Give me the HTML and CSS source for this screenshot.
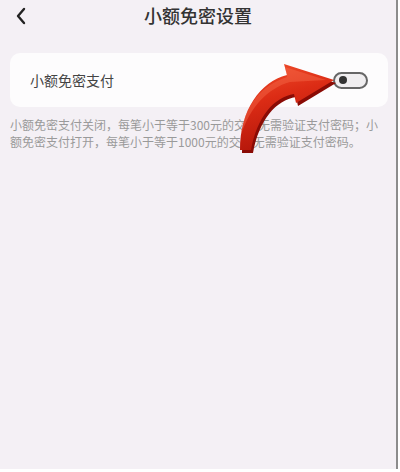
FILE: index.html
```html
<!DOCTYPE html>
<html lang="zh-CN">
<head>
    <meta charset="UTF-8">
    <meta name="viewport" content="width=device-width, initial-scale=1.0">
    <title>小额免密设置</title>
    <link rel="stylesheet" href="styles.css">
</head>
<body>
    <div class="screen">
        <header class="topbar">
            <a href="#" class="back">
                <svg width="12" height="18" viewBox="0 0 12 18">
                    <path d="M9 2 L3 9 L9 16" fill="none" stroke="#222" stroke-width="2.4" stroke-linecap="round" stroke-linejoin="round"/>
                </svg>
            </a>
            <h1>小额免密设置</h1>
        </header>

        <div class="card">
            <span class="card-label">小额免密支付</span>
            <div class="switch">
                <div class="switch-knob"></div>
            </div>
        </div>

        <p class="desc">小额免密支付关闭，每笔小于等于300元的交易无需验证支付密码；小额免密支付打开，每笔小于等于1000元的交易无需验证支付密码。</p>

        <!-- 红色指示箭头 -->
        <svg class="arrow" width="110" height="100" viewBox="0 0 110 100">
            <defs>
                <linearGradient id="arrowFill" x1="0" y1="0" x2="0.3" y2="1">
                    <stop offset="0" stop-color="#f2522e"/>
                    <stop offset="0.45" stop-color="#dc2c15"/>
                    <stop offset="1" stop-color="#b3160a"/>
                </linearGradient>
            </defs>
            <path transform="translate(2 3)" d="M10 95 C10 55, 30 27, 57 20 L54 9 L104 25 L66 48 L64 39 C44 42, 27 62, 21 95 Z" fill="#8a0b05"/>
            <path d="M10 95 C10 55, 30 27, 57 20 L54 9 L104 25 L66 48 L64 39 C44 42, 27 62, 21 95 Z" fill="url(#arrowFill)"/>
            <path d="M11 80 C14 52, 31 30, 57 22 L55 12 L96 25 L60 27 C38 33, 20 52, 11 80 Z" fill="#f7714f" opacity="0.4"/>
        </svg>
    </div>
</body>
</html>
```

FILE: styles.css
```css
body {
    margin: 0;
    padding: 0;
    background-color: #fff;
    font-family: "Noto Sans CJK SC", "Noto Sans", sans-serif;
    color: #333;
}
.screen {
    position: relative;
    width: 396px;
    height: 469px;
    background-color: #f4f0f5;
    border-right: 2px solid #8c8c8c;
    overflow: hidden;
}
.topbar {
    position: relative;
    height: 30px;
    display: flex;
    align-items: center;
    justify-content: center;
}
.topbar h1 {
    margin: 0;
    font-size: 18px;
    font-weight: 500;
    color: #333;
    line-height: 30px;
}
.back {
    position: absolute;
    left: 15px;
    top: 7px;
    display: flex;
}
.card {
    margin: 23px 8px 0 10px;
    height: 54px;
    background-color: #fdfcfd;
    border-radius: 10px;
    display: flex;
    align-items: center;
    justify-content: space-between;
    padding: 0 20px 0 20px;
}
.card-label {
    font-size: 14px;
    color: #444;
}
.switch {
    width: 27px;
    height: 13px;
    border: 2px solid #666;
    border-radius: 10px;
    background-color: #f0eef0;
    display: flex;
    align-items: center;
    padding: 0 2px;
}
.switch-knob {
    width: 8px;
    height: 8px;
    border-radius: 50%;
    background-color: #333;
    margin-left: 2px;
}
.desc {
    margin: 9px 12px 0 10px;
    font-size: 12px;
    line-height: 17px;
    color: #9a9a9a;
}
.arrow {
    position: absolute;
    left: 230px;
    top: 55px;
}
```
